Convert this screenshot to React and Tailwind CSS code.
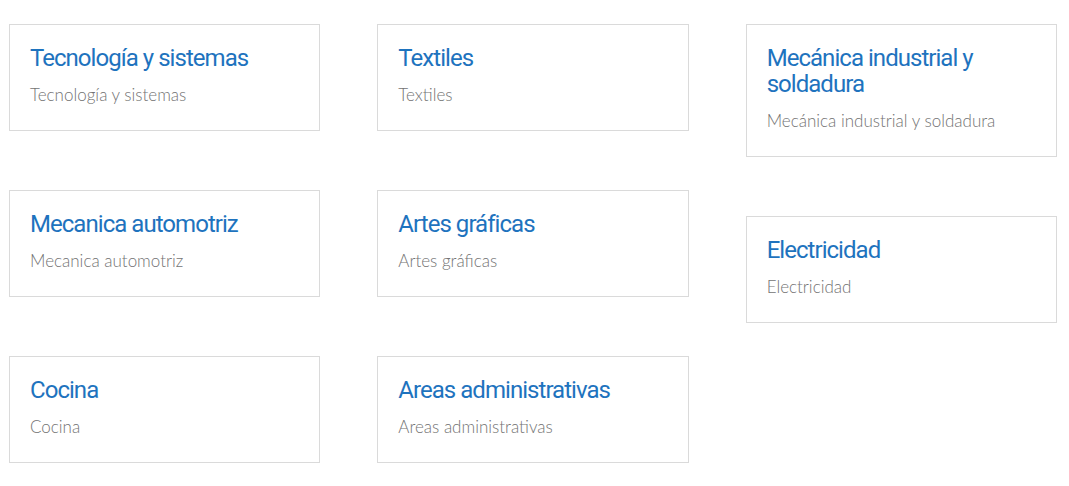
import React from "react";

const columns = [
  ["Tecnología y sistemas", "Mecanica automotriz", "Cocina"],
  ["Textiles", "Artes gráficas", "Areas administrativas"],
  ["Mecánica industrial y soldadura", "Electricidad"],
];

const AreaCard = ({ title }) => (
  <div className="border border-[#dadada] bg-white pt-5 pb-[23px] px-5">
    <h3 className="font-['Roboto',sans-serif] text-[24px] leading-[26px] tracking-[-0.04em] text-[#1e73be] mb-[12px]">
      {title}
    </h3>
    <p className="font-['Lato',sans-serif] font-light text-[17px] leading-6 text-[#737373]">
      {title}
    </p>
  </div>
);

const App = () => {
  return (
    <div className="min-h-screen bg-white pt-6 pl-[9px] pr-3">
      <div className="grid grid-cols-3 gap-x-[57px] items-start">
        {columns.map((col, i) => (
          <div key={i} className="flex flex-col gap-[59px]">
            {col.map((title) => (
              <AreaCard key={title} title={title} />
            ))}
          </div>
        ))}
      </div>
    </div>
  );
};

export default App;
